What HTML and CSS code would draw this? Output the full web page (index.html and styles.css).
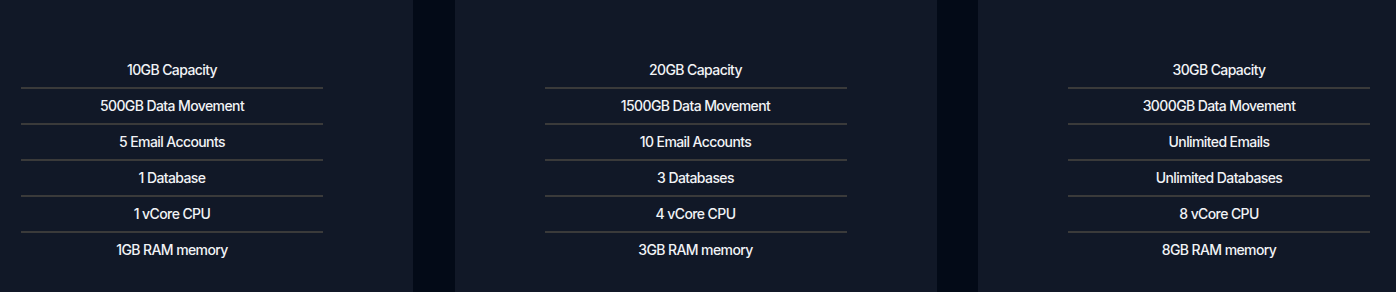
FILE: index.html
```html
<!DOCTYPE html>
<html lang="en">
<head>
<meta charset="utf-8">
<title>Plans</title>
<link rel="stylesheet" href="styles.css">
</head>
<body>
<div class="viewport">
  <div class="plans">
    <div class="card">
      <ul class="features">
        <li>10GB Capacity</li>
        <li>500GB Data Movement</li>
        <li>5 Email Accounts</li>
        <li>1 Database</li>
        <li>1 vCore CPU</li>
        <li>1GB RAM memory</li>
      </ul>
    </div>
    <div class="card">
      <ul class="features">
        <li>20GB Capacity</li>
        <li>1500GB Data Movement</li>
        <li>10 Email Accounts</li>
        <li>3 Databases</li>
        <li>4 vCore CPU</li>
        <li>3GB RAM memory</li>
      </ul>
    </div>
    <div class="card">
      <ul class="features">
        <li>30GB Capacity</li>
        <li>3000GB Data Movement</li>
        <li>Unlimited Emails</li>
        <li>Unlimited Databases</li>
        <li>8 vCore CPU</li>
        <li>8GB RAM memory</li>
      </ul>
    </div>
  </div>
</div>
</body>
</html>
```
FILE: styles.css
```css
html, body {
  margin: 0;
  padding: 0;
  background: #030a17;
}
body {
  font-family: Inter, "Noto Sans", sans-serif;
  color: #f1f3f6;
}
.viewport {
  width: 1396px;
  height: 292px;
  overflow: hidden;
}
.plans {
  display: flex;
  gap: 41.5px;
  margin-left: -69px;
  width: 1600px;
}
.card {
  flex: 0 0 482px;
  height: 292px;
  background: #111827;
  padding-top: 53px;
  box-sizing: border-box;
}
.features {
  list-style: none;
  margin: 0 auto;
  padding: 0;
  width: 302px;
}
.features li {
  height: 33px;
  padding-bottom: 1px;
  display: flex;
  align-items: center;
  justify-content: center;
  font-size: 14px;
  font-weight: 500;
  letter-spacing: -0.6px;
  border-bottom: 2px solid #3a3a3a;
}
.features li:last-child {
  border-bottom: none;
}
```
